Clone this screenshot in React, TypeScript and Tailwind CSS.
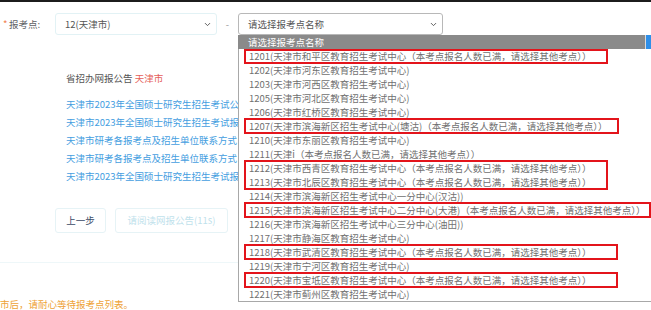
import { ChevronDown } from "lucide-react";

const links = [
  "天津市2023年全国硕士研究生招生考试公告",
  "天津市2023年全国硕士研究生招生考试报名须知",
  "天津市研考各报考点及招生单位联系方式",
  "天津市研考各报考点及招生单位联系方式",
  "天津市2023年全国硕士研究生招生考试报考须知",
];

const full = "（本考点报名人数已满，请选择其他考点））";

const options = [
  "1201(天津市和平区教育招生考试中心" + full,
  "1202(天津市河东区教育招生考试中心)",
  "1203(天津市河西区教育招生考试中心)",
  "1205(天津市河北区教育招生考试中心)",
  "1206(天津市红桥区教育招生考试中心)",
  "1207(天津市滨海新区招生考试中心(塘沽)" + full,
  "1210(天津市东丽区教育招生考试中心)",
  "1211(天津i" + full,
  "1212(天津市西青区教育招生考试中心" + full,
  "1213(天津市北辰区教育招生考试中心" + full,
  "1214(天津市滨海新区招生考试中心一分中心(汉沽))",
  "1215(天津市滨海新区招生考试中心二分中心(大港)" + full,
  "1216(天津市滨海新区招生考试中心三分中心(油田))",
  "1217(天津市静海区教育招生考试中心)",
  "1218(天津市武清区教育招生考试中心" + full,
  "1219(天津市宁河区教育招生考试中心)",
  "1220(天津市宝坻区教育招生考试中心" + full,
  "1221(天津市蓟州区教育招生考试中心)",
];

// red annotation boxes drawn over the open list
const marks = [
  { top: "top-[0px]", h: "h-[15px]", w: "w-[364px]" },
  { top: "top-[69px]", h: "h-[16px]", w: "w-[375px]" },
  { top: "top-[111px]", h: "h-[30px]", w: "w-[364px]" },
  { top: "top-[153px]", h: "h-[16px]", w: "w-[407px]" },
  { top: "top-[195px]", h: "h-[16px]", w: "w-[374px]" },
  { top: "top-[223px]", h: "h-[16px]", w: "w-[374px]" },
];

export default function App() {
  return (
    <div className="relative h-[310px] w-[651px] overflow-hidden bg-white font-['Noto_Sans_CJK_SC',sans-serif] text-[9.5px] text-[#606266]">
      <div className="h-[2px] bg-[#1c1c1c]" />

      <div className="mt-[11px] flex h-[22px] items-center">
        <div className="flex w-[55px] items-center">
          <span className="ml-[3px] w-[6px] text-[#f27b4a]">*</span>
          <span>报考点:</span>
        </div>
        <div className="flex h-[22px] w-[162px] items-center justify-between rounded-[3px] border border-[#e2f2f5] pl-[9px] pr-[4px] text-[#555]">
          <span>12(天津市)</span>
          <ChevronDown size={9} strokeWidth={2.5} className="text-[#555]" />
        </div>
        <span className="w-[21px] text-center text-[#999]">-</span>
        <div className="flex h-[22px] w-[205px] items-center justify-between rounded-[3px] border border-[#b8b8b8] pl-[9px] pr-[4px] text-[#555]">
          <span>请选择报考点名称</span>
          <ChevronDown size={9} strokeWidth={2.5} className="text-[#555]" />
        </div>
      </div>

      <div className="ml-[55px] mt-[36px]">
        <div className="pl-[11px] leading-[14px] text-[#555]">
          省招办网报公告 <span className="text-[#e5605a]">天津市</span>
        </div>
        <div className="mt-[10px] pl-[11px]">
          {links.map((t, i) => (
            <div key={i} className="whitespace-nowrap leading-[18px] text-[#449edf]">
              {t}
            </div>
          ))}
        </div>
        <div className="mt-[23px] flex gap-[9px]">
          <button className="h-[25px] w-[51px] rounded-[3px] border border-[#e6f3f6] text-[#3b4a66]">上一步</button>
          <button className="h-[25px] w-[113px] rounded-[3px] border border-[#e6f3f6] text-[#bfe2ec]">请阅读网报公告(11s)</button>
        </div>
      </div>

      <div className="mt-[29px] h-px bg-[#eef7f9]" />
      <div className="mt-[34px] whitespace-nowrap leading-[14px] text-[#eea236]">市后，请耐心等待报考点列表。</div>

      <div className="absolute left-[238px] right-0 top-[35px]">
        <div className="flex h-[14px]">
          <div className="flex-1 bg-[#8a8a8a] pl-[10px] leading-[14px] text-white">请选择报考点名称</div>
          <div className="w-[1px] bg-[#dcdcdc]" />
          <div className="w-[5px] bg-[#2f8fe8]" />
        </div>
        <div className="relative border-b border-l border-[#a8a8a8] bg-white">
          {options.map((t, i) => (
            <div key={i} className="h-[14px] whitespace-nowrap pl-[10px] leading-[14px] text-[#707070]">
              {t}
            </div>
          ))}
          {marks.map((m, i) => (
            <div key={i} className={`absolute left-[5px] border-2 border-[#e3141b] ${m.top} ${m.h} ${m.w}`} />
          ))}
        </div>
      </div>
    </div>
  );
}
